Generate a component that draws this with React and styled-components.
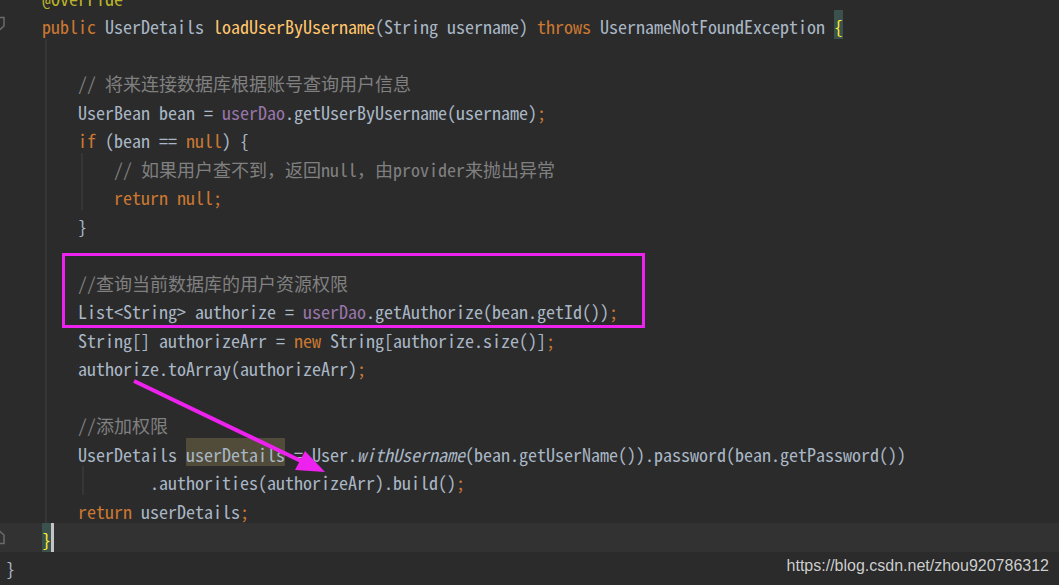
import React from 'react'
import styled, { createGlobalStyle } from 'styled-components'

const GlobalStyle = createGlobalStyle`
  html, body {
    margin: 0;
    padding: 0;
    background: #2b2b2b;
    overflow: hidden;
  }
`

const colors = {
  kw: '#cc7832',
  cm: '#808080',
  tx: '#a9b7c6',
  fn: '#ffc66d',
  fd: '#9876aa',
  an: '#bbb529',
  it: '#a9b7c6',
}

// each row: indent (in columns), tokens, and what decorates it
const rows = [
  { indent: 4, tokens: [['an', '@Override']] },
  {
    indent: 4,
    fold: 'down',
    tokens: [
      ['kw', 'public'],
      ['tx', ' UserDetails '],
      ['fn', 'loadUserByUsername'],
      ['tx', '(String username) '],
      ['kw', 'throws'],
      ['tx', ' UsernameNotFoundException '],
      ['brace', '{'],
    ],
  },
  { guides: [45], tokens: [] },
  { indent: 8, guides: [45], tokens: [['cm', '// 将来连接数据库根据账号查询用户信息']] },
  {
    indent: 8,
    guides: [45],
    tokens: [
      ['tx', 'UserBean bean = '],
      ['fd', 'userDao'],
      ['tx', '.getUserByUsername(username)'],
      ['kw', ';'],
    ],
  },
  {
    indent: 8,
    guides: [45],
    tokens: [['kw', 'if'], ['tx', ' (bean == '], ['kw', 'null'], ['tx', ') {']],
  },
  { indent: 12, guides: [45, 81], tokens: [['cm', '// 如果用户查不到，返回null，由provider来抛出异常']] },
  { indent: 12, guides: [45, 81], tokens: [['kw', 'return'], ['tx', ' '], ['kw', 'null;']] },
  { indent: 8, guides: [45], tokens: [['tx', '}']] },
  { guides: [45], tokens: [] },
  { indent: 8, guides: [45], tokens: [['cm', '//查询当前数据库的用户资源权限']] },
  {
    indent: 8,
    guides: [45],
    tokens: [
      ['tx', 'List<String> authorize = '],
      ['fd', 'userDao'],
      ['tx', '.getAuthorize(bean.getId())'],
      ['kw', ';'],
    ],
  },
  {
    indent: 8,
    guides: [45],
    tokens: [
      ['tx', 'String[] authorizeArr = '],
      ['kw', 'new'],
      ['tx', ' String[authorize.size()]'],
      ['kw', ';'],
    ],
  },
  { indent: 8, guides: [45], tokens: [['tx', 'authorize.toArray(authorizeArr)'], ['kw', ';']] },
  { guides: [45], tokens: [] },
  { indent: 8, guides: [45], tokens: [['cm', '//添加权限']] },
  {
    indent: 8,
    guides: [45],
    tokens: [
      ['tx', 'UserDetails '],
      ['usage', 'userDetails'],
      ['tx', ' = User.'],
      ['it', 'withUsername'],
      ['tx', '(bean.getUserName()).password(bean.getPassword())'],
    ],
  },
  {
    indent: 16,
    guides: [45, 82],
    tokens: [['tx', '.authorities(authorizeArr).build()'], ['kw', ';']],
  },
  { indent: 8, guides: [45], tokens: [['kw', 'return'], ['tx', ' userDetails'], ['kw', ';']] },
  { indent: 4, current: true, fold: 'up', tokens: [['brace', '}'], ['caret', '']] },
  { indent: 0, tokens: [['tx', '}']] },
]

// indent guides are painted as thin background stripes on the row
const guideLayers = guides =>
  guides.map(x => `linear-gradient(#363636, #363636) ${x}px 0 / 2px 100% no-repeat`).join(', ') ||
  'none'

const App = () => (
  <Page>
    <GlobalStyle />
    <Editor>
      {rows.map((row, i) => (
        <Line key={i} $current={row.current} $guides={row.guides || []}>
          <Gutter>{row.fold && <FoldMark dir={row.fold} />}</Gutter>
          <Code $indent={row.indent || 0}>
            {row.tokens.map(([type, text], j) => {
              if (type === 'brace') return <Brace key={j}>{text}</Brace>
              if (type === 'usage') return <Usage key={j}>{text}</Usage>
              if (type === 'caret') return <Caret key={j} />
              return (
                <Tok key={j} $t={type}>
                  {text}
                </Tok>
              )
            })}
          </Code>
        </Line>
      ))}
    </Editor>

    <Callout />
    <Arrow viewBox="0 0 1059 585">
      <line x1="134" y1="381" x2="303" y2="462" stroke="#ee22ee" strokeWidth="4" />
      <polygon points="325,472 295,470 305,451" fill="#ee22ee" />
    </Arrow>

    <Watermark>https://blog.csdn.net/zhou920786312</Watermark>
  </Page>
)

export default App

const FoldMark = ({ dir }) => (
  <FoldIcon viewBox="0 0 12 16">
    {dir === 'down' ? (
      <path d="M1 1.5 H11 V10 L6 14.5 L1 10 Z" fill="none" stroke="#6b6b6b" strokeWidth="1.5" />
    ) : (
      <path d="M1 14.5 H11 V6 L6 1.5 L1 6 Z" fill="none" stroke="#6b6b6b" strokeWidth="1.5" />
    )}
  </FoldIcon>
)

const Page = styled.div`
  position: relative;
  width: 1059px;
  height: 585px;
  overflow: hidden;
  background: #2b2b2b;
`

const Editor = styled.div`
  display: flex;
  flex-direction: column;
  margin-top: -18.5px;
  font-family: 'Noto Sans Mono CJK SC', 'Liberation Mono', monospace;
  font-size: 18px;
  color: #a9b7c6;
`

const Line = styled.div`
  display: flex;
  height: 28.5px;
  background: ${p => guideLayers(p.$guides)};
  background-color: ${p => (p.$current ? '#323232' : 'transparent')};
`

const Gutter = styled.div`
  flex: 0 0 6px;
  display: flex;
  align-items: center;
`

const FoldIcon = styled.svg`
  flex: none;
  margin-left: -7px;
  width: 12px;
  height: 16px;
`

const Code = styled.div`
  flex: 1;
  white-space: pre;
  line-height: 32px;
  padding-left: ${p => p.$indent * 9}px;
`

const Tok = styled.span`
  color: ${p => colors[p.$t]};
  font-style: ${p => (p.$t === 'it' ? 'italic' : 'normal')};
`

const Brace = styled.span`
  display: inline-block;
  vertical-align: top;
  height: 28.5px;
  background: #3b514d;
  color: #ffef28;
`

const Usage = styled.span`
  display: inline-block;
  vertical-align: top;
  height: 28.5px;
  background: #504c39;
  color: #a9b7c6;
`

const Caret = styled.span`
  display: inline-block;
  vertical-align: top;
  width: 3px;
  height: 28.5px;
  background: #c4c4c4;
`

const Callout = styled.div`
  position: absolute;
  left: 62px;
  top: 253px;
  width: 583px;
  height: 75px;
  box-sizing: border-box;
  border: 3px solid #ee22ee;
`

const Arrow = styled.svg`
  position: absolute;
  left: 0;
  top: 0;
  width: 1059px;
  height: 585px;
  pointer-events: none;
`

const Watermark = styled.div`
  position: absolute;
  right: 10px;
  bottom: 10px;
  font-family: 'Liberation Sans', Arial, sans-serif;
  font-size: 16px;
  color: #cfcfcf;
  text-shadow: 0 0 1px rgba(0, 0, 0, 0.4);
`
